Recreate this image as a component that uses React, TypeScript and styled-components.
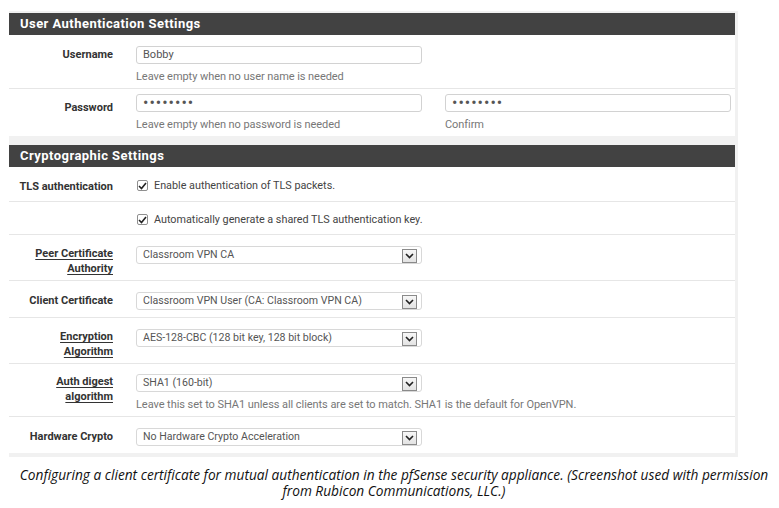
import React from "react";
import styled, { createGlobalStyle } from "styled-components";

const Global = createGlobalStyle`
  html, body { margin: 0; padding: 0; background: #fff; }
  body { font-family: Roboto, "Liberation Sans", Arial, sans-serif; }
`;

const Page = styled.div`
  width: 779px;
  height: 508px;
  padding-top: 11px;
  box-sizing: border-box;
  overflow: hidden;
`;

const Frame = styled.div`
  margin-left: 9px;
  width: 729px;
  box-sizing: border-box;
  background: #f1f1f1;
  padding: 2px 3px 4px 0;
  display: flex;
  flex-direction: column;
  gap: 9px;
`;

const Panel = styled.section`
  background: #fff;
  display: flex;
  flex-direction: column;
`;

const Header = styled.h2`
  margin: 0;
  height: 22px;
  line-height: 22px;
  background: #424242;
  color: #fff;
  font-size: 13px;
  font-weight: 700;
  letter-spacing: 0.45px;
  padding-left: 11px;
`;

const Row = styled.div<{ $top?: number; $last?: boolean }>`
  display: grid;
  grid-template-columns: 127px 1fr;
  align-items: start;
  padding: ${(p) => p.$top ?? 11}px 4px 7px 0;
  border-bottom: ${(p) => (p.$last ? "none" : "1px solid #e6e6e6")};
`;

const Label = styled.div<{ $link?: boolean; $drop?: number }>`
  text-align: right;
  padding-right: 23px;
  padding-top: ${(p) => (p.$link ? 0 : p.$drop ?? 1)}px;
  font-size: 11px;
  line-height: 15px;
  font-weight: 700;
  color: #333;
  text-decoration: ${(p) => (p.$link ? "underline" : "none")};
  text-underline-offset: 2px;
  margin-bottom: ${(p) => (p.$link ? "-3px" : "0")};
`;

const Cell = styled.div`
  display: flex;
  flex-direction: column;
`;

const Pair = styled.div`
  display: grid;
  grid-template-columns: 286px 286px;
  column-gap: 23px;
`;

const TextBox = styled.div`
  width: 286px;
  height: 18px;
  box-sizing: border-box;
  border: 1px solid #d2d2d2;
  border-radius: 3px;
  padding-left: 6px;
  font-size: 11px;
  line-height: 16px;
  color: #555;
  background: #fff;
  overflow: hidden;
`;

const Dots = styled.span`
  font-size: 16px;
  line-height: 16px;
  letter-spacing: 1px;
  color: #555;
`;

const Help = styled.div`
  margin-top: 6px;
  margin-bottom: -3px;
  font-size: 11px;
  line-height: 14px;
  letter-spacing: -0.06px;
  color: #777;
`;

const SelectBox = styled.div`
  position: relative;
  width: 286px;
  height: 18px;
  box-sizing: border-box;
  border: 1px solid #d8d8d8;
  border-radius: 3px;
  padding-left: 6px;
  font-size: 10.6px;
  line-height: 16px;
  color: #555;
  background: #fff;
`;

const Arrow = styled.span`
  position: absolute;
  right: 4px;
  top: 2px;
  width: 15px;
  height: 14px;
  box-sizing: border-box;
  border: 1px solid #8a8a8a;
  background: linear-gradient(#f7f7f7, #e3e3e3);
  display: flex;
  align-items: center;
  justify-content: center;
`;

const Check = styled.label`
  display: flex;
  align-items: center;
  gap: 6px;
  font-size: 10.8px;
  line-height: 15px;
  color: #444;
  padding-left: 1px;
`;

const Box = styled.span`
  width: 11px;
  height: 11px;
  box-sizing: border-box;
  border: 1px solid #8f8f8f;
  border-radius: 2px;
  background: #fff;
  display: flex;
  align-items: center;
  justify-content: center;
`;

const Caption = styled.p`
  margin: 10px 0 0 9px;
  width: 770px;
  text-align: center;
  font-family: "Open Sans", "Liberation Sans", sans-serif;
  font-style: italic;
  font-size: 13.7px;
  line-height: 16px;
  color: #111;
`;

const Chevron = () => (
  <svg width="9" height="6" viewBox="0 0 9 6">
    <path d="M1 1 L4.5 4.5 L8 1" fill="none" stroke="#222" strokeWidth="1.6" />
  </svg>
);

const Tick = () => (
  <svg width="9" height="8" viewBox="0 0 9 8">
    <path d="M1 4 L3.5 6.5 L8 1" fill="none" stroke="#222" strokeWidth="1.6" />
  </svg>
);

const Select = ({ value }: { value: string }) => (
  <SelectBox>
    {value}
    <Arrow>
      <Chevron />
    </Arrow>
  </SelectBox>
);

const Checkbox = ({ text }: { text: string }) => (
  <Check>
    <Box>
      <Tick />
    </Box>
    {text}
  </Check>
);

export default function App() {
  return (
    <Page>
      <Global />
      <Frame>
        <Panel>
          <Header>User Authentication Settings</Header>
          <Row>
            <Label>Username</Label>
            <Cell>
              <TextBox>Bobby</TextBox>
              <Help>Leave empty when no user name is needed</Help>
            </Cell>
          </Row>
          <Row $top={5} $last>
            <Label $drop={6}>Password</Label>
            <Pair>
              <Cell>
                <TextBox>
                  <Dots>••••••••</Dots>
                </TextBox>
                <Help>Leave empty when no password is needed</Help>
              </Cell>
              <Cell>
                <TextBox>
                  <Dots>••••••••</Dots>
                </TextBox>
                <Help>Confirm</Help>
              </Cell>
            </Pair>
          </Row>
        </Panel>
        <Panel>
          <Header>Cryptographic Settings</Header>
          <Row>
            <Label>TLS authentication</Label>
            <Checkbox text="Enable authentication of TLS packets." />
          </Row>
          <Row $top={10}>
            <Label />
            <Checkbox text="Automatically generate a shared TLS authentication key." />
          </Row>
          <Row>
            <Label $link>
              Peer Certificate
              <br />
              Authority
            </Label>
            <Select value="Classroom VPN CA" />
          </Row>
          <Row>
            <Label>Client Certificate</Label>
            <Select value="Classroom VPN User (CA: Classroom VPN CA)" />
          </Row>
          <Row>
            <Label $link>
              Encryption
              <br />
              Algorithm
            </Label>
            <Select value="AES-128-CBC (128 bit key, 128 bit block)" />
          </Row>
          <Row $top={10}>
            <Label $link>
              Auth digest
              <br />
              algorithm
            </Label>
            <Cell>
              <Select value="SHA1 (160-bit)" />
              <Help>
                Leave this set to SHA1 unless all clients are set to match. SHA1 is the default for OpenVPN.
              </Help>
            </Cell>
          </Row>
          <Row $last>
            <Label>Hardware Crypto</Label>
            <Select value="No Hardware Crypto Acceleration" />
          </Row>
        </Panel>
      </Frame>
      <Caption>
        Configuring a client certificate for mutual authentication in the pfSense security appliance. (Screenshot used with permission
        <br />
        from Rubicon Communications, LLC.)
      </Caption>
    </Page>
  );
}
